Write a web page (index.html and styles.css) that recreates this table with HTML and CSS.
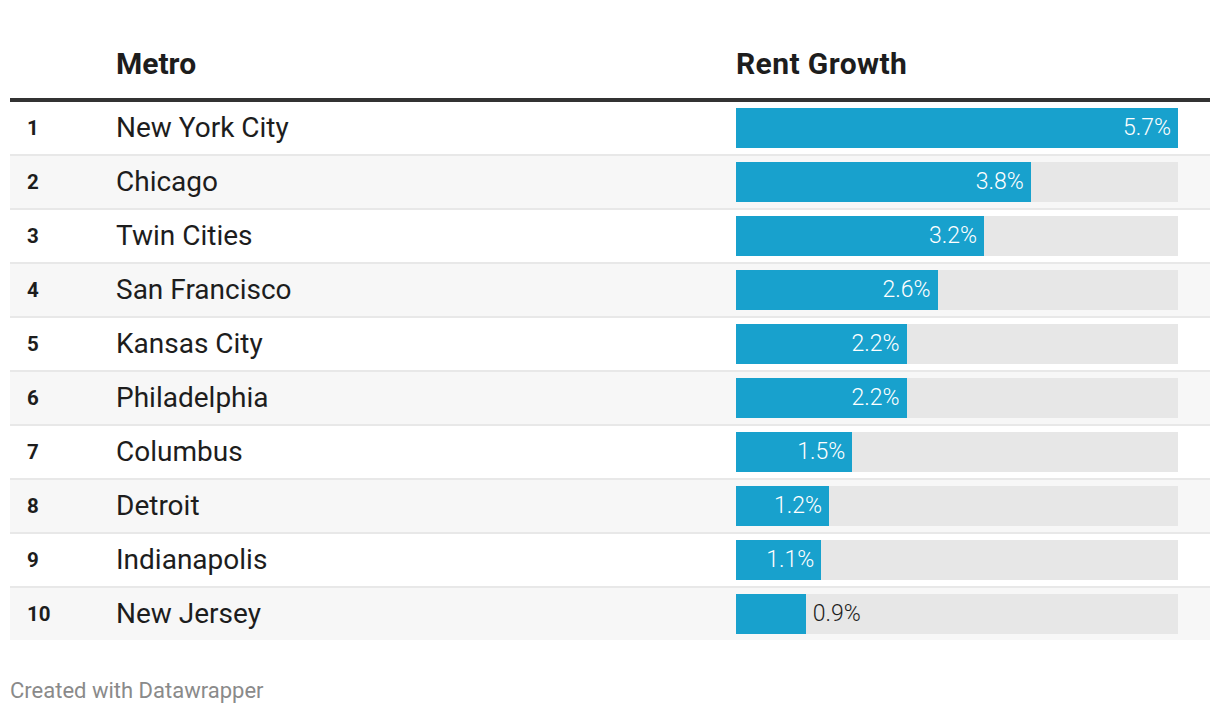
FILE: index.html
```html
<!DOCTYPE html>
<html lang="en">
<head>
<meta charset="utf-8">
<title>Rent Growth</title>
<link rel="stylesheet" href="styles.css">
</head>
<body>
<div class="chart">
  <div class="table">
    <div class="row head">
      <div class="cell rank"></div>
      <div class="cell metro">Metro</div>
      <div class="cell growth">Rent Growth</div>
    </div>
    <div class="row">
      <div class="cell rank">1</div>
      <div class="cell metro">New York City</div>
      <div class="cell growth"><div class="track"><div class="bar" style="width:100%"><span class="val in">5.7%</span></div></div></div>
    </div>
    <div class="row alt">
      <div class="cell rank">2</div>
      <div class="cell metro">Chicago</div>
      <div class="cell growth"><div class="track"><div class="bar" style="width:66.667%"><span class="val in">3.8%</span></div></div></div>
    </div>
    <div class="row">
      <div class="cell rank">3</div>
      <div class="cell metro">Twin Cities</div>
      <div class="cell growth"><div class="track"><div class="bar" style="width:56.14%"><span class="val in">3.2%</span></div></div></div>
    </div>
    <div class="row alt">
      <div class="cell rank">4</div>
      <div class="cell metro">San Francisco</div>
      <div class="cell growth"><div class="track"><div class="bar" style="width:45.61%"><span class="val in">2.6%</span></div></div></div>
    </div>
    <div class="row">
      <div class="cell rank">5</div>
      <div class="cell metro">Kansas City</div>
      <div class="cell growth"><div class="track"><div class="bar" style="width:38.6%"><span class="val in">2.2%</span></div></div></div>
    </div>
    <div class="row alt">
      <div class="cell rank">6</div>
      <div class="cell metro">Philadelphia</div>
      <div class="cell growth"><div class="track"><div class="bar" style="width:38.6%"><span class="val in">2.2%</span></div></div></div>
    </div>
    <div class="row">
      <div class="cell rank">7</div>
      <div class="cell metro">Columbus</div>
      <div class="cell growth"><div class="track"><div class="bar" style="width:26.32%"><span class="val in">1.5%</span></div></div></div>
    </div>
    <div class="row alt">
      <div class="cell rank">8</div>
      <div class="cell metro">Detroit</div>
      <div class="cell growth"><div class="track"><div class="bar" style="width:21.05%"><span class="val in">1.2%</span></div></div></div>
    </div>
    <div class="row">
      <div class="cell rank">9</div>
      <div class="cell metro">Indianapolis</div>
      <div class="cell growth"><div class="track"><div class="bar" style="width:19.3%"><span class="val in">1.1%</span></div></div></div>
    </div>
    <div class="row alt last">
      <div class="cell rank">10</div>
      <div class="cell metro">New Jersey</div>
      <div class="cell growth"><div class="track"><div class="bar" style="width:15.79%"></div><span class="val out">0.9%</span></div></div>
    </div>
  </div>
  <div class="footer">Created with Datawrapper</div>
</div>
</body>
</html>
```

FILE: styles.css
```css
html, body {
  margin: 0;
  padding: 0;
  background: #ffffff;
}
body {
  font-family: Roboto, "Liberation Sans", Arial, sans-serif;
  color: #1d1d1d;
}
.chart {
  padding: 0 10px;
}
.table {
  display: flex;
  flex-direction: column;
}
.row {
  display: grid;
  grid-template-columns: 106px 620px 442px 32px;
  align-items: center;
  height: 54px;
  box-sizing: border-box;
  padding: 6px 0;
  border-bottom: 2px solid #e8e8e8;
}
.row.alt {
  background: #f7f7f7;
}
.row.last {
  height: 52px;
  border-bottom: none;
}
.row.head {
  height: 102px;
  align-items: end;
  padding: 0 0 16px 0;
  border-bottom: 4px solid #333333;
}
.row.head .cell {
  font-weight: 700;
  font-size: 30px;
  line-height: 36px;
  color: #1d1d1d;
}
.row.head .cell.growth {
  letter-spacing: 0.4px;
}
.cell.rank {
  padding-left: 17px;
  font-size: 20.5px;
  font-weight: 700;
  line-height: 40px;
}
.cell.metro {
  font-size: 28px;
  line-height: 40px;
}
.track {
  height: 40px;
  background: #e7e7e7;
  display: flex;
  align-items: center;
}
.bar {
  height: 40px;
  background: #18a1cd;
  display: flex;
  align-items: center;
  justify-content: flex-end;
  box-sizing: border-box;
}
.val {
  font-size: 23px;
  font-weight: 300;
  line-height: 40px;
  white-space: nowrap;
}
.val.in {
  color: #ffffff;
  padding-right: 7px;
}
.val.out {
  color: #1d1d1d;
  padding-left: 7px;
}
.footer {
  margin-top: 38px;
  font-size: 22px;
  line-height: 26px;
  color: #8a8a8a;
}
```
